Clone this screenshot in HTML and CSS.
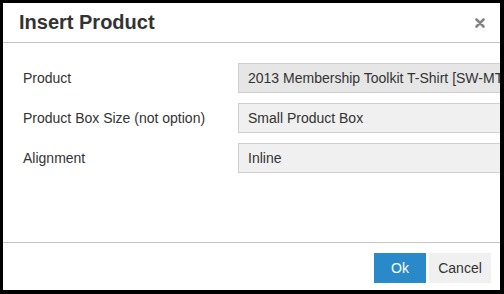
FILE: index.html
```html
<!DOCTYPE html>
<html lang="en">
<head>
  <meta charset="UTF-8" />
  <title>Insert Product</title>
  <link rel="stylesheet" href="styles.css">
</head>
<body>

<div class="dialog">
  <!-- Header -->
  <div class="dialog-header">
    <h1>Insert Product</h1>
    <svg class="close" width="10" height="10" viewBox="0 0 10 10">
      <path d="M1.5 1.5 L8.5 8.5 M8.5 1.5 L1.5 8.5" stroke="#858585" stroke-width="2.6" stroke-linecap="round"/>
    </svg>
  </div>

  <!-- Form rows -->
  <div class="dialog-body">
    <div class="row">
      <label>Product</label>
      <div class="field active">2013 Membership Toolkit T-Shirt [SW-MT13]</div>
    </div>
    <div class="row">
      <label>Product Box Size (not option)</label>
      <div class="field">Small Product Box</div>
    </div>
    <div class="row">
      <label>Alignment</label>
      <div class="field">Inline</div>
    </div>
  </div>

  <!-- Footer buttons -->
  <div class="dialog-footer">
    <button class="btn primary">Ok</button>
    <button class="btn cancel">Cancel</button>
  </div>
</div>

</body>
</html>
```

FILE: styles.css
```css
body {
  margin: 0;
  background-color: #000;
  font-family: "Liberation Sans", Arial, sans-serif;
  color: #333;
}
.dialog {
  margin: 3px;
  width: 497px;
  height: 287px;
  background: #fff;
  overflow: hidden;
  display: flex;
  flex-direction: column;
}
.dialog-header {
  height: 39px;
  border-bottom: 1px solid #c5c5c5;
  display: flex;
  align-items: center;
  justify-content: space-between;
  padding: 0 15px 0 16px;
}
.dialog-header h1 {
  margin: 0;
  font-size: 20px;
  font-weight: bold;
  color: #333;
}
.close {
  display: block;
}
.dialog-body {
  flex: 1;
  padding: 20px 0 0 20px;
  display: flex;
  flex-direction: column;
  gap: 10px;
}
.row {
  display: flex;
  align-items: center;
  height: 30px;
}
.row label {
  width: 215px;
  flex-shrink: 0;
  font-size: 14px;
}
.field {
  flex-shrink: 0;
  width: 320px;
  height: 30px;
  box-sizing: border-box;
  border: 1px solid #cfcfcf;
  background: #f0f0f0;
  padding: 0 9px;
  font-size: 14px;
  line-height: 28px;
  white-space: nowrap;
  overflow: hidden;
}
.field.active {
  background: #e6e6e6;
}
.dialog-footer {
  height: 48px;
  border-top: 1px solid #c5c5c5;
  display: flex;
  justify-content: flex-end;
  align-items: flex-start;
  gap: 3px;
  padding: 10px 9px 0 0;
  box-sizing: border-box;
}
.btn {
  height: 30px;
  border: none;
  background: #f0f0f0;
  color: #333;
  font-family: inherit;
  font-size: 14px;
  padding: 0;
}
.btn.primary {
  width: 52px;
  background: #2a8ac9;
  color: #fff;
}
.btn.cancel {
  width: 62px;
}
```
